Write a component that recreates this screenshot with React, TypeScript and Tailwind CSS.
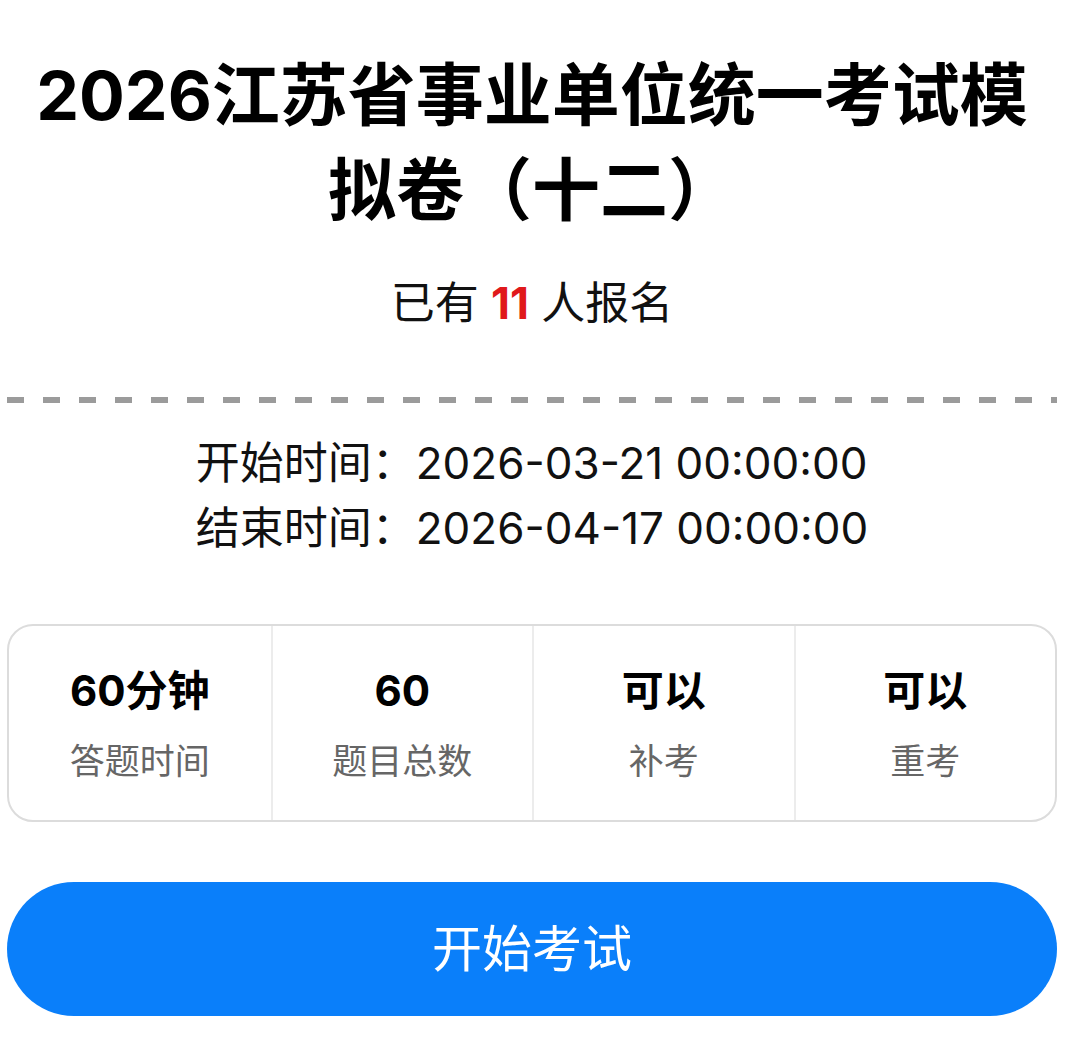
import React from "react";

const stats = [
  { value: "60分钟", label: "答题时间" },
  { value: "60", label: "题目总数" },
  { value: "可以", label: "补考" },
  { value: "可以", label: "重考" },
];

export default function App() {
  return (
    <div
      className="min-h-screen w-[1080px] bg-white pl-[7px] pr-[23px] text-[#111]"
      style={{ fontFamily: '"Inter", "Noto Sans CJK SC", sans-serif' }}
    >
      {/* exam title */}
      <h1 className="px-[20px] pt-[48px] text-center text-[68px] font-bold leading-[95px] text-black">
        2026江苏省事业单位统一考试模拟卷（十二）
      </h1>

      {/* sign-up count */}
      <p className="mt-[35px] text-center text-[44px] leading-[60px]">
        已有 <span className="font-bold text-[#e0191b]">11</span> 人报名
      </p>

      {/* dashed divider */}
      <div className="mt-[64px] h-[6px]">
        <svg width="1050" height="6" className="block">
          <line x1="0" y1="3" x2="1050" y2="3" stroke="#9b9b9b" strokeWidth="6" strokeDasharray="17 19" />
        </svg>
      </div>

      {/* start / end time */}
      <div className="mt-[28px] flex flex-col items-center text-[44px] leading-[65px]">
        <div>
          <p>开始时间：2026-03-21 00:00:00</p>
          <p>结束时间：2026-04-17 00:00:00</p>
        </div>
      </div>

      {/* exam info card */}
      <div className="mt-[63px] grid h-[198px] grid-cols-4 rounded-[26px] border-2 border-[#dcdcdc]">
        {stats.map((s, i) => (
          <div
            key={i}
            className={`flex flex-col items-center justify-center ${i > 0 ? "border-l-2 border-[#ececec]" : ""}`}
          >
            <span className="text-[42px] font-bold leading-[60px] text-black">{s.value}</span>
            <span className="mt-[15px] text-[35px] leading-[50px] text-[#666]">{s.label}</span>
          </div>
        ))}
      </div>

      {/* start button */}
      <button className="mt-[60px] flex h-[134px] w-full items-center justify-center rounded-full bg-[#0a7ffa] text-[50px] text-white">
        开始考试
      </button>
    </div>
  );
}
